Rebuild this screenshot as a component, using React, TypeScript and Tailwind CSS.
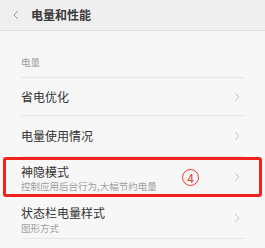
const Chevron = () => (
    <svg width="6" height="10" viewBox="0 0 6 10" className="shrink-0">
        <polyline points="1,1 5,5 1,9" fill="none" stroke="#c4c4c4" strokeWidth="1" />
    </svg>
);

const App = () => {
    return (
        <div
            className="w-[265px] h-[248px] bg-[#f7f7f7] overflow-hidden text-[#333]"
            style={{ fontFamily: '"Noto Sans CJK SC", "Noto Sans", sans-serif' }}
        >
            {/* header */}
            <div className="h-[31px] bg-[#efefef] border-b border-[#dedede] flex items-center pl-[13px]">
                <svg width="6" height="10" viewBox="0 0 6 10">
                    <polyline points="5,1 1,5 5,9" fill="none" stroke="#9a9a9a" strokeWidth="1" />
                </svg>
                <span className="ml-[12px] text-[12px] font-bold text-[#3a3a3a] leading-none">电量和性能</span>
            </div>

            {/* section label */}
            <div className="mx-[21px] pt-[24px] pb-[8px] border-b border-[#e6e6e6]">
                <span className="text-[9.5px] text-[#9e9e9e] leading-[14px] block">电量</span>
            </div>

            <div className="mx-[21px] h-[38px] border-b border-[#e6e6e6] flex items-center justify-between pr-[4px]">
                <span className="text-[12px] leading-none">省电优化</span>
                <Chevron />
            </div>

            <div className="mx-[21px] h-[41px] border-b border-[#e6e6e6] flex items-center justify-between pr-[4px]">
                <span className="text-[12px] leading-none">电量使用情况</span>
                <Chevron />
            </div>

            {/* highlighted row */}
            <div className="relative h-[40px]">
                <div className="mx-[21px] h-full border-b border-[#e6e6e6] flex items-center justify-between pr-[4px]">
                    <div className="flex flex-col pt-[2px]">
                        <span className="text-[12px] leading-[15px]">神隐模式</span>
                        <span className="text-[9.5px] leading-[12px] text-[#a0a0a0] mt-[1px]">控制应用后台行为,大幅节约电量</span>
                    </div>
                    <Chevron />
                </div>
                <div className="absolute left-[182px] top-[12px] w-[17px] h-[17px] rounded-full border-[1.5px] border-[#f0302a] flex items-center justify-center text-[12px] leading-none text-[#f0302a]">
                    4
                </div>
                <div className="absolute left-[3px] right-[3px] top-0 bottom-0 border-[3px] border-[#f5211c] rounded-[3px]" />
            </div>

            <div className="mx-[21px] h-[42px] border-b border-[#e6e6e6] flex items-center justify-between pr-[4px]">
                <div className="flex flex-col pt-[3px]">
                    <span className="text-[12px] leading-[15px]">状态栏电量样式</span>
                    <span className="text-[9.5px] leading-[12px] text-[#a0a0a0] mt-[2px]">图形方式</span>
                </div>
                <Chevron />
            </div>
        </div>
    );
};

export default App;
